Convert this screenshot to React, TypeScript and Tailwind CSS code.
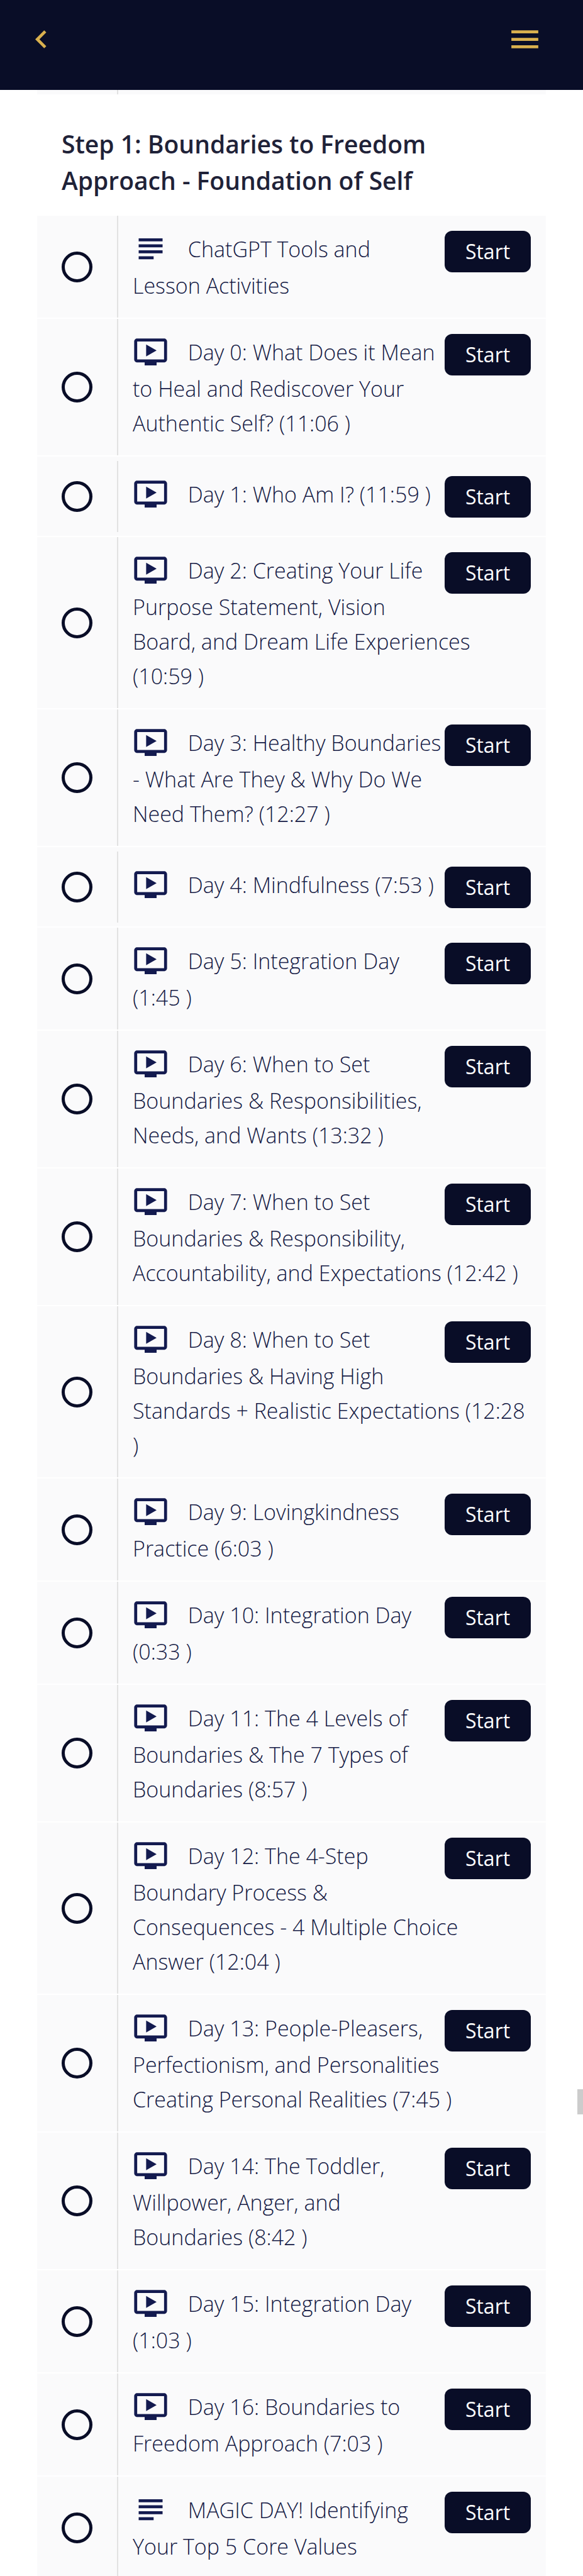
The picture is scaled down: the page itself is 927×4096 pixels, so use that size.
type Lesson = { kind: 'text' | 'video'; title: string };

const lessons: Lesson[] = [
  { kind: 'text', title: 'ChatGPT Tools and Lesson\u00a0Activities' },
  { kind: 'video', title: 'Day 0: What Does it Mean to Heal and Rediscover Your Authentic Self? (11:06 )' },
  { kind: 'video', title: 'Day 1: Who Am I? (11:59 )' },
  { kind: 'video', title: 'Day 2: Creating Your Life Purpose Statement, Vision Board, and Dream Life Experiences (10:59 )' },
  { kind: 'video', title: 'Day 3: Healthy Boundaries - What Are They & Why Do We Need Them? (12:27 )' },
  { kind: 'video', title: 'Day 4: Mindfulness (7:53 )' },
  { kind: 'video', title: 'Day 5: Integration Day (1:45 )' },
  { kind: 'video', title: 'Day 6: When to Set Boundaries & Responsibilities, Needs, and Wants (13:32 )' },
  { kind: 'video', title: 'Day 7: When to Set Boundaries & Responsibility, Accountability, and Expectations (12:42 )' },
  { kind: 'video', title: 'Day 8: When to Set Boundaries & Having High Standards + Realistic Expectations (12:28 )' },
  { kind: 'video', title: 'Day 9: Lovingkindness Practice (6:03 )' },
  { kind: 'video', title: 'Day 10: Integration Day (0:33 )' },
  { kind: 'video', title: 'Day 11: The 4 Levels of Boundaries & The 7 Types of Boundaries (8:57 )' },
  { kind: 'video', title: 'Day 12: The 4-Step Boundary Process & Consequences - 4 Multiple Choice Answer (12:04 )' },
  { kind: 'video', title: 'Day 13: People-Pleasers, Perfectionism, and Personalities Creating Personal Realities (7:45 )' },
  { kind: 'video', title: 'Day 14: The Toddler, Willpower, Anger, and Boundaries (8:42 )' },
  { kind: 'video', title: 'Day 15: Integration Day (1:03 )' },
  { kind: 'video', title: 'Day 16: Boundaries to Freedom Approach (7:03 )' },
  { kind: 'text', title: 'MAGIC DAY! Identifying Your Top 5 Core Values' },
];

const iconPaths = {
  video:
    'M21 3H3c-1.11 0-2 .89-2 2v12c0 1.1.89 2 2 2h5v2h8v-2h5c1.1 0 1.99-.9 1.99-2L23 5c0-1.11-.9-2-2-2zm0 14H3V5h18v12zm-5-6l-7 4V7z',
  text: 'M14 17H4v2h10v-2zm6-8H4v2h16V9zM4 15h16v-2H4v2zM4 5v2h16V5H4z',
  back: 'M15.41 7.41L14 6l-6 6 6 6 1.41-1.41L10.83 12z',
  menu: 'M3 18h18v-2H3v2zm0-5h18v-2H3v2zm0-7v2h18V6H3z',
};

function Icon({ name, className }: { name: keyof typeof iconPaths; className: string }) {
  return (
    <svg viewBox="0 0 24 24" fill="currentColor" aria-hidden="true" className={className}>
      <path d={iconPaths[name]} />
    </svg>
  );
}

function LessonRow({ lesson }: { lesson: Lesson }) {
  return (
    <li className="flex min-h-[126px] items-center bg-[#fafafb]">
      <div className="flex w-[127px] shrink-0 justify-center">
        <span className="size-[49px] rounded-full border-5 border-[#090d27]" />
      </div>
      <div className="flow-root min-w-0 flex-1 border-l-2 border-[#e2e2e2] pt-6 pr-6 pb-[23px] pl-[23px]">
        <button
          type="button"
          className="float-right h-[66px] w-[137px] rounded-xl bg-[#090d27] text-[32px] leading-[66px] text-white"
        >
          Start
        </button>
        <a href="#lesson" className="text-[34px] leading-[55px] font-light text-[#151a45]">
          <Icon name={lesson.kind} className="mr-[22px] mb-[3px] inline size-[57px] align-[-18px] text-[#131a4f]" />{' '}
          {lesson.title}
        </a>
      </div>
    </li>
  );
}

export default function App() {
  return (
    <div className="relative h-screen overflow-hidden bg-white font-['Open_Sans',sans-serif]">
      <header className="flex items-center justify-between bg-[#090d27] pt-[34px] pr-16 pb-[52px] pl-[37px] text-[#d9b04e]">
        <a href="#back" aria-label="Back">
          <Icon name="back" className="block size-[57px]" />
        </a>
        <button type="button" aria-label="Menu">
          <Icon name="menu" className="block size-[57px]" />
        </button>
      </header>
      <main className="px-[59px]">
        <div className="flex h-[7px] bg-[#fafafb] pl-[127px]">
          <div className="w-0.5 bg-[#e2e2e2]" />
        </div>
        <h2 className="px-[39px] pt-[50px] pb-[27px] text-[39px] leading-[58px] font-semibold text-[#1f2238]">
          Step 1: Boundaries to Freedom Approach - Foundation of Self
        </h2>
        <ul className="flex flex-col gap-0.5">
          {lessons.map((lesson) => (
            <LessonRow key={lesson.title} lesson={lesson} />
          ))}
        </ul>
      </main>
      <div className="absolute top-[81.1%] right-0 h-10 w-[9px] bg-[#cccccc]" />
    </div>
  );
}
